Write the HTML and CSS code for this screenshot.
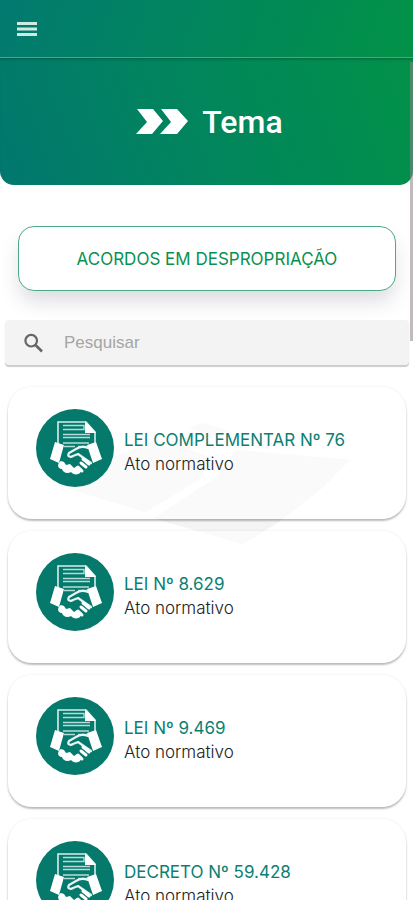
FILE: index.html
```html
<!DOCTYPE html>
<html lang="pt-BR">
<head>
  <meta charset="UTF-8">
  <meta name="viewport" content="width=device-width, initial-scale=1.0">
  <title>Tema - Acordos em Desapropriação</title>
  <link rel="stylesheet" href="styles.css">
</head>
<body>

  <!-- Shared icon: document over a handshake -->
  <svg width="0" height="0" class="defs" aria-hidden="true">
    <symbol id="agreement" viewBox="0 0 78 78">
      <circle cx="39" cy="39" r="39" fill="#04796c"/>
      <path d="M22 35V13H50L59 23V35" fill="none" stroke="#d5efeb" stroke-width="1.6"/>
      <path d="M49 12L60 24H49Z" fill="#fff"/>
      <path d="M27 16.5H48V20.5H27M27 25.5H54M27 28.5H54" fill="none" stroke="#b5ddd7" stroke-width="1.4"/>
      <path d="M27 34H53M28 37.5H39M42 37.5H52" fill="none" stroke="#b5ddd7" stroke-width="1.4"/>
      <path d="M19 33L28 36L23 54L14 50ZM60 33L51 36L57 54L66 50Z" fill="#fff"/>
      <path d="M25 52C21 54 21 60 26 60C27 64 32 65 35 63C37 66 42 66 44 64L46 60L41 57L38 59L34 55L30 56L28 53Z" fill="#fff"/>
      <path d="M52 39C47 37 43 38 40 40L33 44C31 47 34 49 37 47L42 45L55 54" fill="none" stroke="#e8f6f4" stroke-width="2.2" stroke-linecap="round" stroke-linejoin="round"/>
      <path d="M47 50L53 55M45 54L50 58M42 58L46 62" fill="none" stroke="#fff" stroke-width="3" stroke-linecap="round"/>
    </symbol>
  </svg>

  <header class="topbar">
    <button class="menu-button" type="button" aria-label="Menu">
      <svg width="20" height="14" viewBox="0 0 20 14"><path d="M0 1.5H20M0 7H20M0 12.5H20" stroke="#d0e9e3" stroke-width="2.8"/></svg>
    </button>
  </header>

  <main class="content">
    <section class="hero">
      <svg width="52" height="26" viewBox="0 0 52 26" aria-hidden="true">
        <path d="M1 0H17L27 12L16 25H0L11 13ZM25 0H41L52 12L41 25H24L35 13Z" fill="#fff"/>
      </svg>
      <h1>Tema</h1>
    </section>

    <button class="theme-button" type="button">ACORDOS EM DESPROPRIAÇÃO</button>

    <div class="search">
      <svg width="20" height="20" viewBox="0 0 20 20" aria-hidden="true">
        <circle cx="7.2" cy="7.7" r="5.8" fill="none" stroke="#666" stroke-width="2.2"/>
        <path d="M11.5 12L18 18.5" stroke="#666" stroke-width="2.6"/>
      </svg>
      <input type="search" placeholder="Pesquisar" aria-label="Pesquisar">
    </div>

    <div class="list">
      <svg class="watermark" viewBox="0 0 320 150" aria-hidden="true">
        <path d="M0 65L110 22L160 40L152 62L96 96L18 72Z M140 10L155 6L180 14L160 20Z M186 33L302 43L275 71L230 106L194 128L104 102L168 60Z" fill="#f4f4f4"/>
      </svg>
      <a class="card" href="#">
        <svg class="card-icon"><use href="#agreement"/></svg>
        <div>
          <h2>LEI COMPLEMENTAR Nº 76</h2>
          <p>Ato normativo</p>
        </div>
      </a>
      <a class="card" href="#">
        <svg class="card-icon"><use href="#agreement"/></svg>
        <div>
          <h2>LEI Nº 8.629</h2>
          <p>Ato normativo</p>
        </div>
      </a>
      <a class="card" href="#">
        <svg class="card-icon"><use href="#agreement"/></svg>
        <div>
          <h2>LEI Nº 9.469</h2>
          <p>Ato normativo</p>
        </div>
      </a>
      <a class="card" href="#">
        <svg class="card-icon"><use href="#agreement"/></svg>
        <div>
          <h2>DECRETO Nº 59.428</h2>
          <p>Ato normativo</p>
        </div>
      </a>
    </div>
  </main>
  <div class="scroll-thumb"></div>

</body>
</html>
```
FILE: styles.css
```css
* {
  box-sizing: border-box;
}

body {
  margin: 0;
  height: 100vh;
  display: flex;
  flex-direction: column;
  position: relative;
  overflow: hidden;
  background-color: #fff;
  font-family: Inter, "Liberation Sans", sans-serif;
}

.defs {
  position: absolute;
}

.topbar {
  flex: none;
  height: 58px;
  padding: 0 17px;
  display: flex;
  align-items: center;
  background: linear-gradient(110deg, #027a70, #01865c 50%, #029149 95%);
  border-bottom: 1px solid #4aa583;
}

.menu-button {
  padding: 0;
  border: 0;
  background: none;
  line-height: 0;
}

.content {
  flex: 1;
  overflow-y: auto;
  scrollbar-width: none;
}

.hero {
  height: 127px;
  padding-left: 6px;
  display: flex;
  align-items: center;
  justify-content: center;
  gap: 14px;
  color: #fff;
  background: linear-gradient(70deg, #02776f, #01865c 50%, #029149);
  border-radius: 0 0 14px 14px;
  box-shadow: inset 0 3px 3px -2px rgba(0, 60, 40, 0.5);
}

.hero h1 {
  margin: 0;
  font-family: Roboto, sans-serif;
  font-size: 32px;
  line-height: 40px;
  font-weight: 500;
}

.theme-button {
  display: block;
  width: calc(100% - 35px);
  height: 65px;
  margin: 41px 17px 29px 18px;
  border: 1px solid #4aab85;
  border-radius: 16px;
  background-color: #fff;
  box-shadow: 0 12px 20px -2px rgba(60, 60, 90, 0.18);
  color: #0a9151;
  font-family: inherit;
  font-size: 17px;
}

/* Search bar */
.search {
  position: relative;
  display: flex;
  align-items: center;
  gap: 20px;
  height: 45px;
  margin: 0 4px 22px 5px;
  padding: 0 19px;
  background-color: #f3f3f3;
  border-radius: 4px;
  box-shadow: 0 2px 1px #ccc;
}

.search input {
  flex: 1;
  min-width: 0;
  padding: 0;
  border: 0;
  outline: 0;
  background: none;
  font-family: "Liberation Sans", Arial, sans-serif;
  font-size: 17px;
}

.search input::placeholder {
  color: #a5a5a5;
}

/* Results */
.list {
  position: relative;
  display: flex;
  flex-direction: column;
  gap: 12px;
  padding: 0 7px 12px 8px;
}

.watermark {
  position: absolute;
  top: 30px;
  left: 12%;
  width: 77%;
}

.card {
  position: relative;
  display: flex;
  gap: 10px;
  height: 132px;
  padding: 22px 28px;
  border-radius: 24px;
  background-color: rgba(255, 255, 255, 0.5);
  box-shadow: 0 2px 2px rgba(0, 0, 0, 0.25), 0 0 3px rgba(0, 0, 0, 0.08);
  color: inherit;
  text-decoration: none;
}

.card-icon {
  flex: none;
  width: 78px;
  height: 78px;
}

.card h2 {
  margin: 19px 0 0;
  font-size: 17px;
  line-height: 24px;
  font-weight: 400;
  color: #0b8072;
}

.card p {
  margin: 0;
  font-size: 17px;
  line-height: 24px;
  font-weight: 300;
  color: #222;
}

.scroll-thumb {
  position: absolute;
  top: 62px;
  right: 0;
  width: 3px;
  height: 31%;
  background-color: rgba(140, 130, 130, 0.55);
}
```
